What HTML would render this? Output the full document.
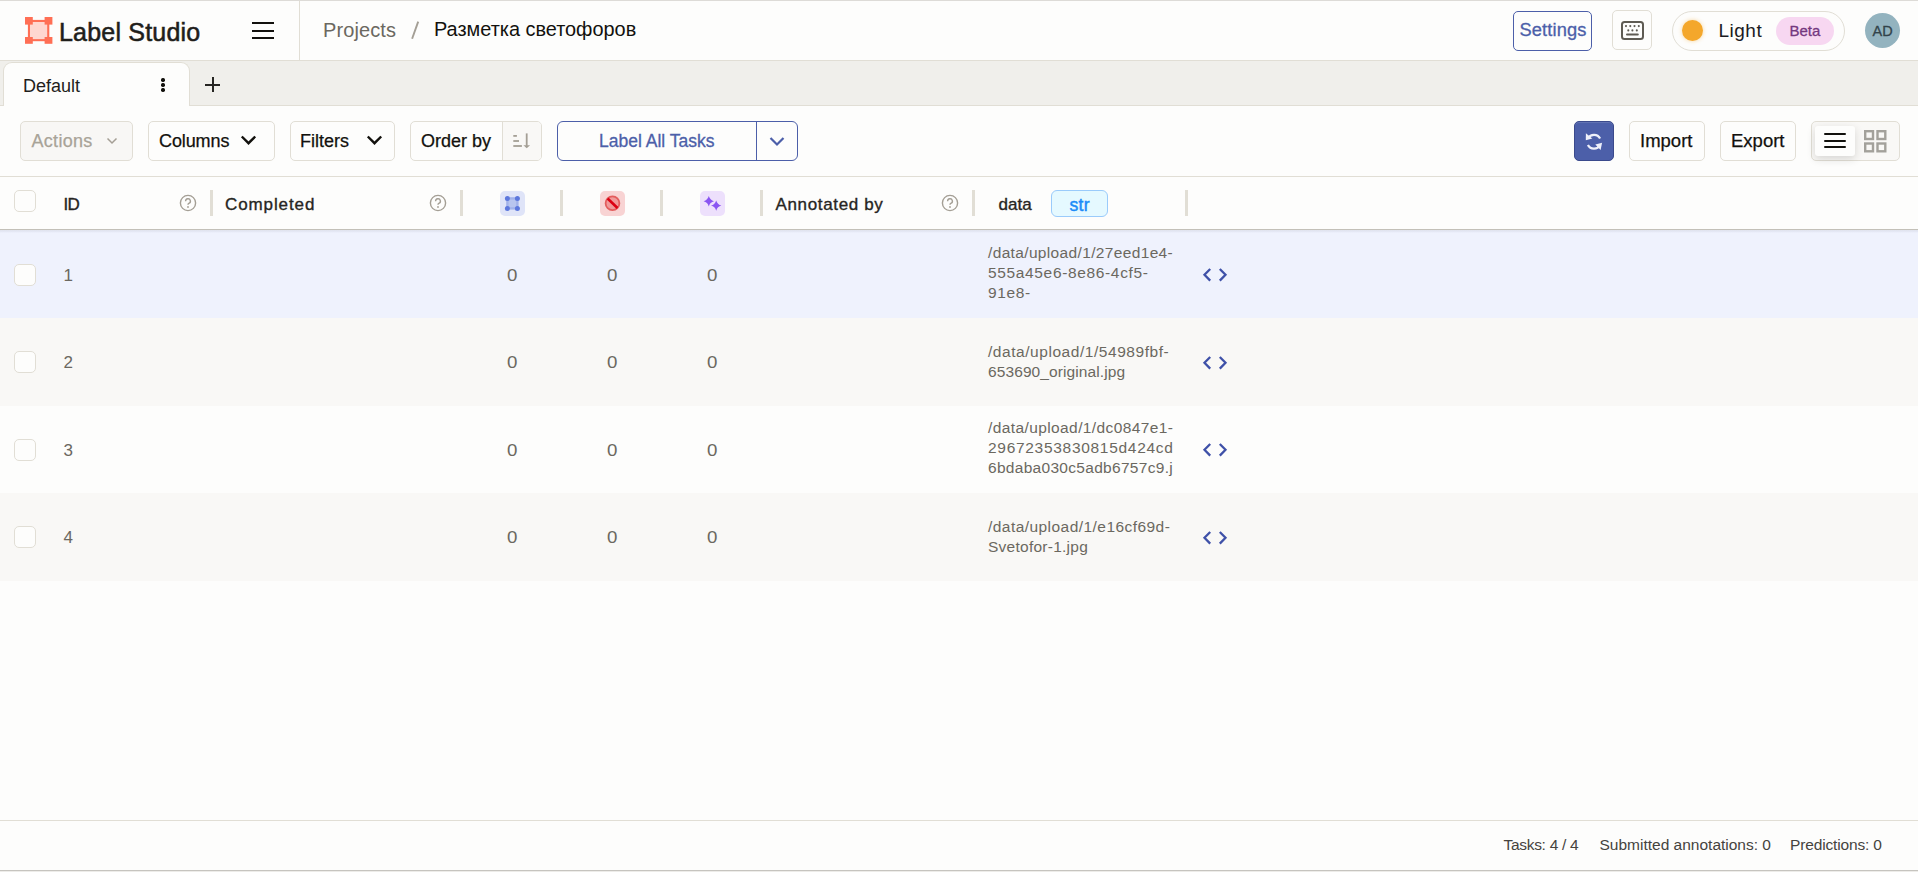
<!DOCTYPE html>
<html><head><meta charset="utf-8">
<style>
*{box-sizing:border-box;margin:0;padding:0}
html,body{width:1918px;height:872px;overflow:hidden;background:#FDFDFC;font-family:"Liberation Sans",sans-serif;color:#12110D}
.a{position:absolute}
.t{position:absolute;white-space:nowrap;line-height:1}
.btn{position:absolute;border:1px solid #E1DED5;border-radius:5px;background:#FDFDFC}
.hl{position:absolute;left:0;width:1918px;height:1px;background:#E1DED5}
.div{position:absolute;top:190px;width:3px;height:26px;background:#E1DED5}
.cb{position:absolute;left:14px;width:22px;height:22px;border:1px solid #E1DED5;border-radius:5px;background:#FDFDFC}
.num{position:absolute;font-size:17px;color:#6B6860;line-height:1;white-space:nowrap}
.z{transform:scaleX(1.1);transform-origin:0 0}
.dt{position:absolute;left:988px;font-size:15.5px;line-height:1;color:#6B6860;white-space:nowrap}
</style></head>
<body>
<!-- top line -->
<div class="a" style="left:0;top:0;width:1918px;height:1px;background:#dddbd7"></div>

<!-- HEADER -->
<div class="hl" style="top:60px"></div>
<svg class="a" style="left:25px;top:17px" width="28" height="27" viewBox="0 0 28 27">
  <rect x="4.5" y="4.5" width="18.5" height="18" fill="#FFD7D0"/>
  <g fill="#FF6F55">
  <rect x="4" y="2.9" width="20" height="2.1"/>
  <rect x="4" y="22.1" width="20" height="2.1"/>
  <rect x="2.9" y="4" width="2.1" height="19"/>
  <rect x="22.2" y="4" width="2.1" height="19"/>
  <rect x="0" y="0" width="7.8" height="7.6"/>
  <rect x="19.6" y="0" width="7.8" height="7.6"/>
  <rect x="0" y="20" width="7.8" height="6.8"/>
  <rect x="19.6" y="20" width="7.8" height="6.8"/>
  </g>
</svg>
<div class="t" style="left:59px;top:20px;font-size:25px;letter-spacing:0.2px;-webkit-text-stroke:0.55px #1f1e1b;color:#1f1e1b">Label Studio</div>
<div class="a" style="left:252px;top:22px;width:22px;height:2px;background:#12110D"></div>
<div class="a" style="left:252px;top:30px;width:22px;height:2px;background:#12110D"></div>
<div class="a" style="left:252px;top:37px;width:22px;height:2px;background:#12110D"></div>
<div class="a" style="left:299px;top:1px;width:1px;height:59px;background:#E1DED5"></div>
<div class="t" style="left:323px;top:20px;font-size:20px;letter-spacing:0.1px;color:#6B6860">Projects</div>
<svg class="a" style="left:408px;top:18px" width="14" height="24" viewBox="0 0 14 24"><path d="M10.2 3.6 L4.1 20.8" stroke="#A49F95" stroke-width="1.9" stroke-linecap="butt"/></svg>
<div class="t" style="left:434px;top:20px;font-size:19.9px;color:#12110D">Разметка светофоров</div>

<div class="btn" style="left:1513px;top:11px;width:79px;height:40px;border-color:#4C5FA9"></div>
<div class="t" style="left:1519.5px;top:21.4px;font-size:18.3px;letter-spacing:0.12px;-webkit-text-stroke:0.3px #4C5FA9;color:#4C5FA9">Settings</div>
<div class="btn" style="left:1612px;top:10px;width:40px;height:40px"></div>
<svg class="a" style="left:1621px;top:21px" width="23" height="19" viewBox="0 0 23 19">
  <rect x="1" y="1" width="21" height="17" rx="2.5" fill="none" stroke="#5E5B53" stroke-width="2"/>
  <g fill="#5E5B53"><circle cx="5" cy="5.1" r="1.05"/><circle cx="9.3" cy="5.1" r="1.05"/><circle cx="13.5" cy="5.1" r="1.05"/><circle cx="17.8" cy="5.1" r="1.05"/>
  <circle cx="7.3" cy="9.4" r="1.05"/><circle cx="11.4" cy="9.4" r="1.05"/><circle cx="15.8" cy="9.4" r="1.05"/>
  <rect x="5" y="12.5" width="12.8" height="2" rx="1"/></g>
</svg>
<div class="a" style="left:1672px;top:11px;width:173px;height:40px;border:1px solid #E1DED5;border-radius:20px"></div>
<div class="a" style="left:1682px;top:20px;width:21px;height:21px;border-radius:50%;background:#F4A72B;box-shadow:0 0 4px rgba(244,167,43,.45)"></div>
<div class="t" style="left:1718.5px;top:21.3px;font-size:19px;letter-spacing:0.5px;color:#1a1a22">Light</div>
<div class="a" style="left:1776px;top:17px;width:58px;height:28px;border-radius:14px;background:#F7D7F1"></div>
<div class="t" style="left:1789.5px;top:23px;font-size:15px;-webkit-text-stroke:0.3px #74387F;color:#74387F">Beta</div>
<div class="a" style="left:1865px;top:13px;width:35px;height:35px;border-radius:50%;background:#93B3BF"></div>
<div class="t" style="left:1872.5px;top:24px;font-size:14.5px;-webkit-text-stroke:0.3px #32434A;color:#32434A">AD</div>

<!-- TAB BAR -->
<div class="a" style="left:0;top:61px;width:1918px;height:44px;background:#F0EFEB"></div>
<div class="hl" style="top:105px"></div>
<div class="a" style="left:3px;top:62px;width:187px;height:44px;background:#FDFDFC;border:1px solid #E1DED5;border-bottom:none;border-radius:9px 9px 0 0"></div>
<div class="t" style="left:23px;top:77.3px;font-size:18px;color:#1f1e1b">Default</div>
<div class="a" style="left:161.2px;top:78.3px;width:3.4px;height:3.4px;border-radius:50%;background:#12110D"></div>
<div class="a" style="left:161.2px;top:83.3px;width:3.4px;height:3.4px;border-radius:50%;background:#12110D"></div>
<div class="a" style="left:161.2px;top:88.3px;width:3.4px;height:3.4px;border-radius:50%;background:#12110D"></div>
<div class="a" style="left:205px;top:83.5px;width:15px;height:2px;background:#262522"></div>
<div class="a" style="left:211.5px;top:77px;width:2px;height:15px;background:#262522"></div>

<!-- TOOLBAR -->
<div class="hl" style="top:176px"></div>
<div class="btn" style="left:20px;top:121px;width:113px;height:40px;background:#F8F7F5"></div>
<div class="t" style="left:31.5px;top:132px;font-size:18px;letter-spacing:0.3px;-webkit-text-stroke:0.25px #A8A398;color:#A8A398">Actions</div>
<svg class="a" style="left:106px;top:137px" width="12" height="8" viewBox="0 0 12 8"><path d="M1.5 1.5 L6 6 L10.5 1.5" fill="none" stroke="#A49F95" stroke-width="1.5"/></svg>

<div class="btn" style="left:148px;top:121px;width:127px;height:40px"></div>
<div class="t" style="left:159px;top:132px;font-size:18px;letter-spacing:-0.1px;-webkit-text-stroke:0.25px #12110D;color:#12110D">Columns</div>
<svg class="a" style="left:240px;top:134.3px" width="17" height="12" viewBox="0 0 17 12"><path d="M1.8 2.5 L8.5 9.2 L15.2 2.5" fill="none" stroke="#12110D" stroke-width="2.4"/></svg>

<div class="btn" style="left:290px;top:121px;width:105px;height:40px"></div>
<div class="t" style="left:300px;top:132px;font-size:18px;-webkit-text-stroke:0.25px #12110D;color:#12110D">Filters</div>
<svg class="a" style="left:366px;top:134.3px" width="17" height="12" viewBox="0 0 17 12"><path d="M1.8 2.5 L8.5 9.2 L15.2 2.5" fill="none" stroke="#12110D" stroke-width="2.4"/></svg>

<div class="btn" style="left:410px;top:121px;width:132px;height:40px;overflow:hidden"><div class="a" style="left:91px;top:0;width:40px;height:38px;background:#F9F8F6;border-left:1px solid #E1DED5"></div></div>
<div class="t" style="left:421px;top:132px;font-size:18px;-webkit-text-stroke:0.25px #12110D;color:#12110D">Order by</div>
<svg class="a" style="left:512px;top:133px" width="20" height="17" viewBox="0 0 20 17">
 <g fill="#A49F95"><rect x="1.3" y="2" width="3.6" height="1.8"/><rect x="1.3" y="7.1" width="5.7" height="1.8"/><rect x="1.3" y="12.1" width="8.6" height="1.8"/></g>
 <rect x="13.8" y="0.4" width="1.8" height="12.5" fill="#A49F95"/>
 <path d="M11.4 12.2 L18.1 12.2 L14.7 15.3 Z" fill="#A49F95"/>
</svg>

<div class="a" style="left:557px;top:121px;width:241px;height:40px;border:1.3px solid #4C5FA9;border-radius:6px"></div>
<div class="a" style="left:756px;top:121px;width:1.3px;height:40px;background:#4C5FA9"></div>
<div class="t" style="left:599px;top:133px;font-size:17.5px;-webkit-text-stroke:0.3px #4C5FA9;color:#4C5FA9">Label All Tasks</div>
<svg class="a" style="left:769px;top:136px" width="16" height="11" viewBox="0 0 16 11"><path d="M1.5 2 L8 8.5 L14.5 2" fill="none" stroke="#4C5FA9" stroke-width="2.2"/></svg>

<div class="a" style="left:1574px;top:121px;width:40px;height:40px;border-radius:5px;background:#4C5FA9;border:1px solid #3B4A8C;box-shadow:inset 0 1px 0 rgba(255,255,255,.12)"></div>
<svg class="a" style="left:1584px;top:131px" width="20" height="20" viewBox="0 0 20 20">
 <path d="M4.02 7.35 A6.9 6.9 0 0 1 16.09 7.56" fill="none" stroke="#EEF0FA" stroke-width="2.3"/>
 <path d="M3.91 14.04 A6.9 6.9 0 0 0 15.98 14.25" fill="none" stroke="#EEF0FA" stroke-width="2.3" transform="rotate(0)"/>
 <path d="M1.9 2.3 L1.8 9.2 L8.3 7.6 Z" fill="#EEF0FA"/>
 <path d="M18.1 11.8 L16.6 19 L11.3 13.6 Z" fill="#EEF0FA"/>
</svg>

<div class="btn" style="left:1629px;top:121px;width:76px;height:40px"></div>
<div class="t" style="left:1640px;top:132px;font-size:18.5px;-webkit-text-stroke:0.25px #12110D;color:#12110D">Import</div>
<div class="btn" style="left:1720px;top:121px;width:76px;height:40px"></div>
<div class="t" style="left:1731px;top:132px;font-size:18.5px;-webkit-text-stroke:0.25px #12110D;color:#12110D">Export</div>

<div class="btn" style="left:1811px;top:121px;width:89px;height:40px;background:#F9F8F6"></div>
<div class="a" style="left:1815px;top:126px;width:40px;height:30px;border-radius:3px;background:#FDFDFC;box-shadow:0 3px 9px rgba(38,37,34,.16)"></div>
<div class="a" style="left:1824px;top:133px;width:22px;height:2.4px;border-radius:1.2px;background:#12110D"></div>
<div class="a" style="left:1824px;top:139.5px;width:22px;height:2.4px;border-radius:1.2px;background:#12110D"></div>
<div class="a" style="left:1824px;top:146px;width:22px;height:2.4px;border-radius:1.2px;background:#12110D"></div>
<svg class="a" style="left:1864px;top:130px" width="23" height="23" viewBox="0 0 23 23"><g fill="none" stroke="#A3A19B" stroke-width="2.4"><rect x="1.2" y="1.2" width="7.8" height="7.8"/><rect x="13.5" y="1.2" width="7.8" height="7.8"/><rect x="1.2" y="13.5" width="7.8" height="7.8"/><rect x="13.5" y="13.5" width="7.8" height="7.8"/></g></svg>

<!-- ROWS -->
<div class="a" style="left:0;top:230px;width:1918px;height:88px;background:#EFF2FD"></div>
<div class="cb" style="top:264.00px"></div>
<div class="num" style="left:63.4px;top:266.50px">1</div>
<div class="num z" style="left:507px;top:266.50px">0</div>
<div class="num z" style="left:607px;top:266.50px">0</div>
<div class="num z" style="left:707px;top:266.50px">0</div>
<div class="dt" style="top:245.00px;letter-spacing:0.35px">/data/upload/1/27eed1e4-</div>
<div class="dt" style="top:265.00px;letter-spacing:0.65px">555a45e6-8e86-4cf5-</div>
<div class="dt" style="top:285.00px;letter-spacing:0.6px">91e8-</div>
<svg class="a" style="left:1201px;top:265.00px" width="28" height="20" viewBox="0 0 28 20"><path d="M9.2 4 L3.5 9.8 L9.2 15.6 M18.8 4 L24.5 9.8 L18.8 15.6" fill="none" stroke="#3F51A8" stroke-width="2.3"/></svg>
<div class="a" style="left:0;top:318px;width:1918px;height:87.5px;background:#F9F8F6"></div>
<div class="cb" style="top:351.00px"></div>
<div class="num" style="left:63.4px;top:354.25px">2</div>
<div class="num z" style="left:507px;top:354.25px">0</div>
<div class="num z" style="left:607px;top:354.25px">0</div>
<div class="num z" style="left:707px;top:354.25px">0</div>
<div class="dt" style="top:344.00px;letter-spacing:0.55px">/data/upload/1/54989fbf-</div>
<div class="dt" style="top:364.00px;letter-spacing:0.1px">653690_original.jpg</div>
<svg class="a" style="left:1201px;top:352.75px" width="28" height="20" viewBox="0 0 28 20"><path d="M9.2 4 L3.5 9.8 L9.2 15.6 M18.8 4 L24.5 9.8 L18.8 15.6" fill="none" stroke="#3F51A8" stroke-width="2.3"/></svg>
<div class="a" style="left:0;top:405.5px;width:1918px;height:87.5px;background:#FDFDFC"></div>
<div class="cb" style="top:439.25px"></div>
<div class="num" style="left:63.4px;top:441.75px">3</div>
<div class="num z" style="left:507px;top:441.75px">0</div>
<div class="num z" style="left:607px;top:441.75px">0</div>
<div class="num z" style="left:707px;top:441.75px">0</div>
<div class="dt" style="top:420.00px;letter-spacing:0.4px">/data/upload/1/dc0847e1-</div>
<div class="dt" style="top:440.00px;letter-spacing:0.7px">29672353830815d424cd</div>
<div class="dt" style="top:460.00px;letter-spacing:0.3px">6bdaba030c5adb6757c9.j</div>
<svg class="a" style="left:1201px;top:440.25px" width="28" height="20" viewBox="0 0 28 20"><path d="M9.2 4 L3.5 9.8 L9.2 15.6 M18.8 4 L24.5 9.8 L18.8 15.6" fill="none" stroke="#3F51A8" stroke-width="2.3"/></svg>
<div class="a" style="left:0;top:493px;width:1918px;height:87.5px;background:#F9F8F6"></div>
<div class="cb" style="top:526.00px"></div>
<div class="num" style="left:63.4px;top:529.25px">4</div>
<div class="num z" style="left:507px;top:529.25px">0</div>
<div class="num z" style="left:607px;top:529.25px">0</div>
<div class="num z" style="left:707px;top:529.25px">0</div>
<div class="dt" style="top:519.00px;letter-spacing:0.45px">/data/upload/1/e16cf69d-</div>
<div class="dt" style="top:539.00px;letter-spacing:0.25px">Svetofor-1.jpg</div>
<svg class="a" style="left:1201px;top:527.75px" width="28" height="20" viewBox="0 0 28 20"><path d="M9.2 4 L3.5 9.8 L9.2 15.6 M18.8 4 L24.5 9.8 L18.8 15.6" fill="none" stroke="#3F51A8" stroke-width="2.3"/></svg>

<!-- FOOTER -->
<div class="hl" style="top:820px"></div>
<div class="t" style="left:1503.5px;top:837px;font-size:15.5px;letter-spacing:-0.3px;color:#45433E">Tasks: 4 / 4</div>
<div class="t" style="left:1599.5px;top:837px;font-size:15.5px;color:#45433E">Submitted annotations: 0</div>
<div class="t" style="left:1790px;top:837px;font-size:15.5px;letter-spacing:-0.15px;color:#45433E">Predictions: 0</div>
<div class="a" style="left:0;top:870px;width:1918px;height:1px;background:#C6C4BF"></div><div class="a" style="left:0;top:871px;width:1918px;height:1px;background:#EDECE9"></div>

<!-- TABLE HEADER -->
<div class="a" style="left:0;top:229px;width:1918px;height:1px;background:#C3C0B8"></div><div class="a" style="left:0;top:230px;width:1918px;height:3px;background:linear-gradient(rgba(90,90,100,.10),rgba(90,95,130,.07) 50%,rgba(90,95,130,0))"></div>
<div class="cb" style="top:190px"></div>
<div class="t" style="left:63.5px;top:196.2px;font-size:17px;letter-spacing:-0.8px;-webkit-text-stroke:0.35px #262522;color:#262522">ID</div>
<svg class="a" style="left:179px;top:194px" width="18" height="18" viewBox="0 0 18 18"><circle cx="9" cy="9" r="7.6" fill="none" stroke="#A49F95" stroke-width="1.4"/><path d="M6.6 7.2 A2.4 2.4 0 1 1 9.8 9.4 C9.2 9.7 9 10.1 9 10.8" fill="none" stroke="#A49F95" stroke-width="1.4"/><circle cx="9" cy="13" r=".9" fill="#A49F95"/></svg>
<div class="div" style="left:210px"></div>
<div class="t" style="left:225px;top:196.2px;font-size:17px;letter-spacing:0.9px;-webkit-text-stroke:0.35px #262522;color:#262522">Completed</div>
<svg class="a" style="left:429px;top:194px" width="18" height="18" viewBox="0 0 18 18"><circle cx="9" cy="9" r="7.6" fill="none" stroke="#A49F95" stroke-width="1.4"/><path d="M6.6 7.2 A2.4 2.4 0 1 1 9.8 9.4 C9.2 9.7 9 10.1 9 10.8" fill="none" stroke="#A49F95" stroke-width="1.4"/><circle cx="9" cy="13" r=".9" fill="#A49F95"/></svg>
<div class="div" style="left:460px"></div>
<div class="a" style="left:500px;top:191px;width:25px;height:25px;border-radius:5px;background:#DFE4F8"></div>
<svg class="a" style="left:500px;top:191px" width="25" height="25" viewBox="0 0 25 25"><rect x="7.4" y="7.4" width="10" height="10" fill="#B8C5EF" stroke="#A2B2EA" stroke-width="2.4"/><g fill="#5D78DD"><circle cx="7.4" cy="7.4" r="2.5"/><circle cx="17.4" cy="7.4" r="2.5"/><circle cx="7.4" cy="17.4" r="2.5"/><circle cx="17.4" cy="17.4" r="2.5"/></g></svg>
<div class="div" style="left:560px"></div>
<div class="a" style="left:600px;top:191px;width:25px;height:25px;border-radius:5px;background:#F8D3D3"></div>
<svg class="a" style="left:600px;top:191px" width="25" height="25" viewBox="0 0 25 25"><circle cx="12.5" cy="12.3" r="6.9" fill="#F09A9A" stroke="#E35D5D" stroke-width="1.8"/><path d="M7.6 7.5 L17.5 17" stroke="#DC0012" stroke-width="2.6"/></svg>
<div class="div" style="left:660px"></div>
<div class="a" style="left:700px;top:191px;width:25px;height:25px;border-radius:5px;background:#EDE0FC"></div>
<svg class="a" style="left:700px;top:191px" width="25" height="25" viewBox="0 0 25 25"><g fill="#8A55F2"><path d="M8.8 4.999999999999999 Q9.944 9.056 14.0 10.2 Q9.944 11.344 8.8 15.399999999999999 Q7.656000000000001 11.344 3.6000000000000005 10.2 Q7.656000000000001 9.056 8.8 4.999999999999999 Z"/><path d="M16.2 9.399999999999999 Q17.344 13.456 21.4 14.6 Q17.344 15.744 16.2 19.8 Q15.056 15.744 11.0 14.6 Q15.056 13.456 16.2 9.399999999999999 Z"/></g></svg>
<div class="div" style="left:760px"></div>
<div class="t" style="left:775.5px;top:196.2px;font-size:17px;letter-spacing:0.65px;-webkit-text-stroke:0.35px #262522;color:#262522">Annotated by</div>
<svg class="a" style="left:941px;top:194px" width="18" height="18" viewBox="0 0 18 18"><circle cx="9" cy="9" r="7.6" fill="none" stroke="#A49F95" stroke-width="1.4"/><path d="M6.6 7.2 A2.4 2.4 0 1 1 9.8 9.4 C9.2 9.7 9 10.1 9 10.8" fill="none" stroke="#A49F95" stroke-width="1.4"/><circle cx="9" cy="13" r=".9" fill="#A49F95"/></svg>
<div class="div" style="left:972px;width:2.5px"></div>
<div class="t" style="left:998.5px;top:196.2px;font-size:17px;letter-spacing:0px;-webkit-text-stroke:0.35px #262522;color:#262522">data</div>
<div class="a" style="left:1051px;top:190px;width:57px;height:27px;border-radius:6px;background:#E5F9FF;border:1px solid #9ACBFB"></div>
<div class="t" style="left:1069.5px;top:196.5px;font-size:17.5px;letter-spacing:0.3px;-webkit-text-stroke:0.45px #1A8BF8;color:#1A8BF8">str</div>
<div class="div" style="left:1185px"></div>

</body></html>
